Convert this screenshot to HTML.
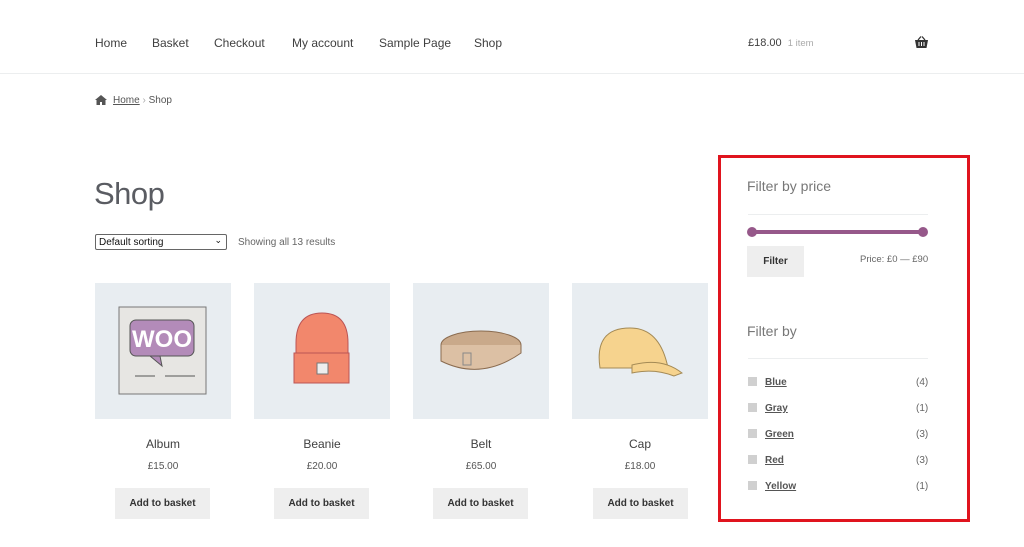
<!DOCTYPE html>
<html><head><meta charset="utf-8"><style>
*{margin:0;padding:0;box-sizing:border-box}
body{width:1024px;height:547px;background:#fff;font-family:"Liberation Sans",sans-serif;color:#43454b;position:relative;overflow:hidden}
.a{position:absolute;white-space:nowrap}
.nav{top:36px;font-size:12px;color:#404040}
.hr{position:absolute;height:1px;background:#eceeef}
.img{position:absolute;top:283px;width:136px;height:136px;background:#e8edf1}
.t{position:absolute;top:437px;width:136px;text-align:center;font-size:12px;color:#404040}
.p{position:absolute;top:461px;width:136px;text-align:center;font-size:10px;color:#555}
.b{position:absolute;top:488px;width:95px;height:31px;background:#eeeeee;font-size:10px;font-weight:bold;color:#333;text-align:center;line-height:32px}
.cb{position:absolute;left:748px;width:9px;height:9px;background:#d0d0d0}
.lk{position:absolute;left:765px;font-size:10px;color:#555;text-decoration:underline;font-weight:bold}
.ct{position:absolute;left:916px;font-size:10px;color:#666}
</style></head><body>
<div class="a nav" style="left:95px">Home</div>
<div class="a nav" style="left:152px">Basket</div>
<div class="a nav" style="left:214px">Checkout</div>
<div class="a nav" style="left:292px">My account</div>
<div class="a nav" style="left:379px">Sample Page</div>
<div class="a nav" style="left:474px">Shop</div>
<div class="a" style="left:748px;top:37px;font-size:11px;color:#404040">£18.00 <span style="font-size:9.5px;color:#aaa;margin-left:3px">1 item</span></div>
<svg class="a" style="left:914px;top:36px" width="15" height="13" viewBox="0 0 15 13"><path d="M1 4h13l-1.5 8h-10z" fill="#333"/><path d="M4 4l3-3.5M11 4L8 .5" stroke="#333" stroke-width="1.3" fill="none"/><path d="M5 6v4M7.5 6v4M10 6v4" stroke="#fff" stroke-width="1"/></svg>
<div class="hr" style="left:0;top:73px;width:1024px"></div>
<svg class="a" style="left:95px;top:95px" width="12" height="10" viewBox="0 0 12 10"><path d="M6 0L0 5h1.5v5h3.5V7h2v3h3.5V5H12z" fill="#555"/></svg>
<div class="a" style="left:113px;top:95px;font-size:10px;color:#555"><u>Home</u> <span style="color:#aaa">›</span> Shop</div>
<div class="a" style="left:94px;top:176px;font-size:31px;color:#5a5c62;letter-spacing:-.5px">Shop</div>
<div class="a" style="left:95px;top:234px;width:132px;height:16px;border:1px solid #666;border-radius:2px;font-size:10px;padding:2px 3px;color:#111">Default sorting<span style="position:absolute;right:4px;top:0;font-size:9px">⌄</span></div>
<div class="a" style="left:238px;top:237px;font-size:10px;color:#666">Showing all 13 results</div>

<div class="img" style="left:95px"><svg width="136" height="136"><rect x="24" y="24" width="87" height="87" fill="#e7e6e3" stroke="#777" stroke-width="1"/><rect x="35" y="37" width="64" height="36" rx="6" fill="#b38bb9" stroke="#555"/><path d="M55 73l12 10-2-10z" fill="#b38bb9" stroke="#555"/><text x="67" y="64" text-anchor="middle" font-size="24" font-weight="bold" fill="#fff" font-family="Liberation Sans">WOO</text><path d="M40 93h20M70 93h30" stroke="#555"/></svg></div>
<div class="img" style="left:254px"><svg width="136" height="136"><path d="M42 60q0-30 26-30q26 0 26 30v14H42z" fill="#f2876c" stroke="#b55"/><rect x="40" y="70" width="55" height="30" fill="#f2876c" stroke="#b55"/><rect x="63" y="80" width="11" height="11" fill="#eee" stroke="#777"/></svg></div>
<div class="img" style="left:413px"><svg width="136" height="136"><ellipse cx="68" cy="62" rx="40" ry="14" fill="#c9a98a" stroke="#8a6b4f"/><path d="M28 62v16q40 20 80-8V62" fill="#dcc0a4" stroke="#8a6b4f"/><rect x="50" y="70" width="8" height="12" fill="none" stroke="#888"/></svg></div>
<div class="img" style="left:572px"><svg width="136" height="136"><path d="M28 85q-6-40 30-40q30 0 38 40z" fill="#f6d38e" stroke="#a48a55"/><path d="M60 82q30-8 50 8l-8 3q-20-8-42-3z" fill="#f6d38e" stroke="#a48a55"/></svg></div>

<div class="t" style="left:95px">Album</div><div class="t" style="left:254px">Beanie</div><div class="t" style="left:413px">Belt</div><div class="t" style="left:572px">Cap</div>
<div class="p" style="left:95px">£15.00</div><div class="p" style="left:254px">£20.00</div><div class="p" style="left:413px">£65.00</div><div class="p" style="left:572px">£18.00</div>
<div class="b" style="left:115px">Add to basket</div><div class="b" style="left:274px">Add to basket</div><div class="b" style="left:433px">Add to basket</div><div class="b" style="left:593px">Add to basket</div>

<div class="a" style="left:718px;top:155px;width:252px;height:367px;border:3px solid #e0141e"></div>
<div class="a" style="left:747px;top:178px;font-size:14px;color:#777">Filter by price</div>
<div class="hr" style="left:748px;top:214px;width:180px"></div>
<div class="a" style="left:752px;top:230px;width:172px;height:4px;background:#96588a"></div>
<div class="a" style="left:747px;top:227px;width:10px;height:10px;border-radius:50%;background:#96588a"></div>
<div class="a" style="left:918px;top:227px;width:10px;height:10px;border-radius:50%;background:#96588a"></div>
<div class="a" style="left:747px;top:246px;width:57px;height:31px;background:#eeeeee;font-size:10px;font-weight:bold;color:#333;text-align:center;line-height:32px">Filter</div>
<div class="a" style="left:860px;top:254px;font-size:9.5px;color:#666">Price: £0 — £90</div>
<div class="a" style="left:747px;top:323px;font-size:14px;color:#777">Filter by</div>
<div class="hr" style="left:748px;top:358px;width:180px"></div>
<div class="cb" style="top:377px"></div><div class="lk" style="top:377px">Blue</div><div class="ct" style="top:377px">(4)</div>
<div class="cb" style="top:403px"></div><div class="lk" style="top:403px">Gray</div><div class="ct" style="top:403px">(1)</div>
<div class="cb" style="top:429px"></div><div class="lk" style="top:429px">Green</div><div class="ct" style="top:429px">(3)</div>
<div class="cb" style="top:455px"></div><div class="lk" style="top:455px">Red</div><div class="ct" style="top:455px">(3)</div>
<div class="cb" style="top:481px"></div><div class="lk" style="top:481px">Yellow</div><div class="ct" style="top:481px">(1)</div>
</body></html>
